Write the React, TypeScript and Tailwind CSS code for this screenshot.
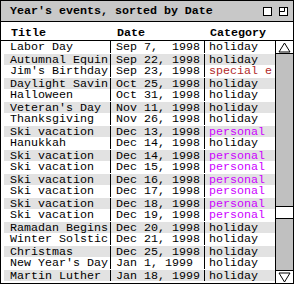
import React from "react";

type Row = { t: string; d: string; c: string };

const rows: Row[] = [
  { t: "Labor Day", d: "Sep 7,  1998", c: "holiday" },
  { t: "Autumnal Equin", d: "Sep 22, 1998", c: "holiday" },
  { t: "Jim's Birthday", d: "Sep 23, 1998", c: "special e" },
  { t: "Daylight Savin", d: "Oct 25, 1998", c: "holiday" },
  { t: "Halloween", d: "Oct 31, 1998", c: "holiday" },
  { t: "Veteran's Day", d: "Nov 11, 1998", c: "holiday" },
  { t: "Thanksgiving", d: "Nov 26, 1998", c: "holiday" },
  { t: "Ski vacation", d: "Dec 13, 1998", c: "personal" },
  { t: "Hanukkah", d: "Dec 14, 1998", c: "holiday" },
  { t: "Ski vacation", d: "Dec 14, 1998", c: "personal" },
  { t: "Ski vacation", d: "Dec 15, 1998", c: "personal" },
  { t: "Ski vacation", d: "Dec 16, 1998", c: "personal" },
  { t: "Ski vacation", d: "Dec 17, 1998", c: "personal" },
  { t: "Ski vacation", d: "Dec 18, 1998", c: "personal" },
  { t: "Ski vacation", d: "Dec 19, 1998", c: "personal" },
  { t: "Ramadan Begins", d: "Dec 20, 1998", c: "holiday" },
  { t: "Winter Solstic", d: "Dec 21, 1998", c: "holiday" },
  { t: "Christmas", d: "Dec 25, 1998", c: "holiday" },
  { t: "New Year's Day", d: "Jan 1, 1999", c: "holiday" },
  { t: "Martin Luther", d: "Jan 18, 1999", c: "holiday" },
];

function catColor(c: string) {
  if (c === "personal") return "text-[#cc00ff]";
  if (c === "special e") return "text-[#b22a2a]";
  return "text-black";
}

export default function App() {
  return (
    <div
      className="w-[294px] h-[284px] border border-black bg-white flex flex-col text-black"
      style={{ fontFamily: '"Liberation Mono", "DejaVu Sans Mono", monospace' }}
    >
      {/* title bar */}
      <div className="h-[21px] shrink-0 bg-[#c8c8c8] border-b border-black flex items-center pl-[9px] pr-[5px]">
        <div className="flex-1 font-bold text-[11.67px] leading-[12px] whitespace-pre">
          Year's events, sorted by Date
        </div>
        <svg width="10" height="10" viewBox="0 0 10 10" className="mr-[6px]">
          <rect x="1.5" y="1.5" width="8" height="8" fill="white" stroke="black" strokeWidth="1" />
        </svg>
        <svg width="10" height="10" viewBox="0 0 10 10">
          <rect x="1.5" y="1.5" width="8" height="8" fill="white" stroke="black" strokeWidth="1" />
          <path d="M6.5 1.5 V5.5 H1.5" fill="none" stroke="black" strokeWidth="1" />
        </svg>
      </div>

      {/* header */}
      <div className="h-[19px] shrink-0 border-b border-black flex font-bold text-[11.67px] leading-[12px] pt-[5px]">
        <div className="w-[110px] pl-[10px]">Title</div>
        <div className="w-[95px] pl-[6px]">Date</div>
        <div className="pl-[4px]">Category</div>
      </div>

      {/* body */}
      <div className="flex-1 flex min-h-0">
        <div className="flex-1 pl-[3px] pb-[1px] min-w-0">
          {rows.map((r, i) => (
            <div
              key={i}
              className={`h-[12px] flex text-[11.67px] leading-[12px] whitespace-pre ${
                i % 2 === 1 ? "bg-[#e2e2e2] border-t border-white" : "bg-white"
              }`}
            >
              <div className="w-[107px] shrink-0 overflow-hidden pl-[6px] border-r border-black">
                {r.t}
              </div>
              <div className="w-[94px] shrink-0 overflow-hidden pl-[5px] border-r border-black">
                {r.d}
              </div>
              <div className={`flex-1 overflow-hidden pl-[4px] ${catColor(r.c)}`}>{r.c}</div>
            </div>
          ))}
        </div>

        {/* scrollbar */}
        <div className="w-[18px] shrink-0 border-l border-black bg-[#c0c0c0] flex flex-col">
          <div className="h-[13px] shrink-0 bg-white border-b border-black flex items-center justify-center">
            <svg width="13" height="11" viewBox="0 0 13 11">
              <path d="M6.5 1 L12 10 H1 Z" fill="white" stroke="black" strokeWidth="1" />
            </svg>
          </div>
          <div className="flex-1 min-h-0">
            <div className="mt-[152px] h-[13px] bg-white border-y border-black" />
          </div>
          <div className="h-[13px] shrink-0 bg-white border-t border-black flex items-center justify-center">
            <svg width="13" height="11" viewBox="0 0 13 11">
              <path d="M1 1 H12 L6.5 10 Z" fill="white" stroke="black" strokeWidth="1" />
            </svg>
          </div>
        </div>
      </div>
    </div>
  );
}
